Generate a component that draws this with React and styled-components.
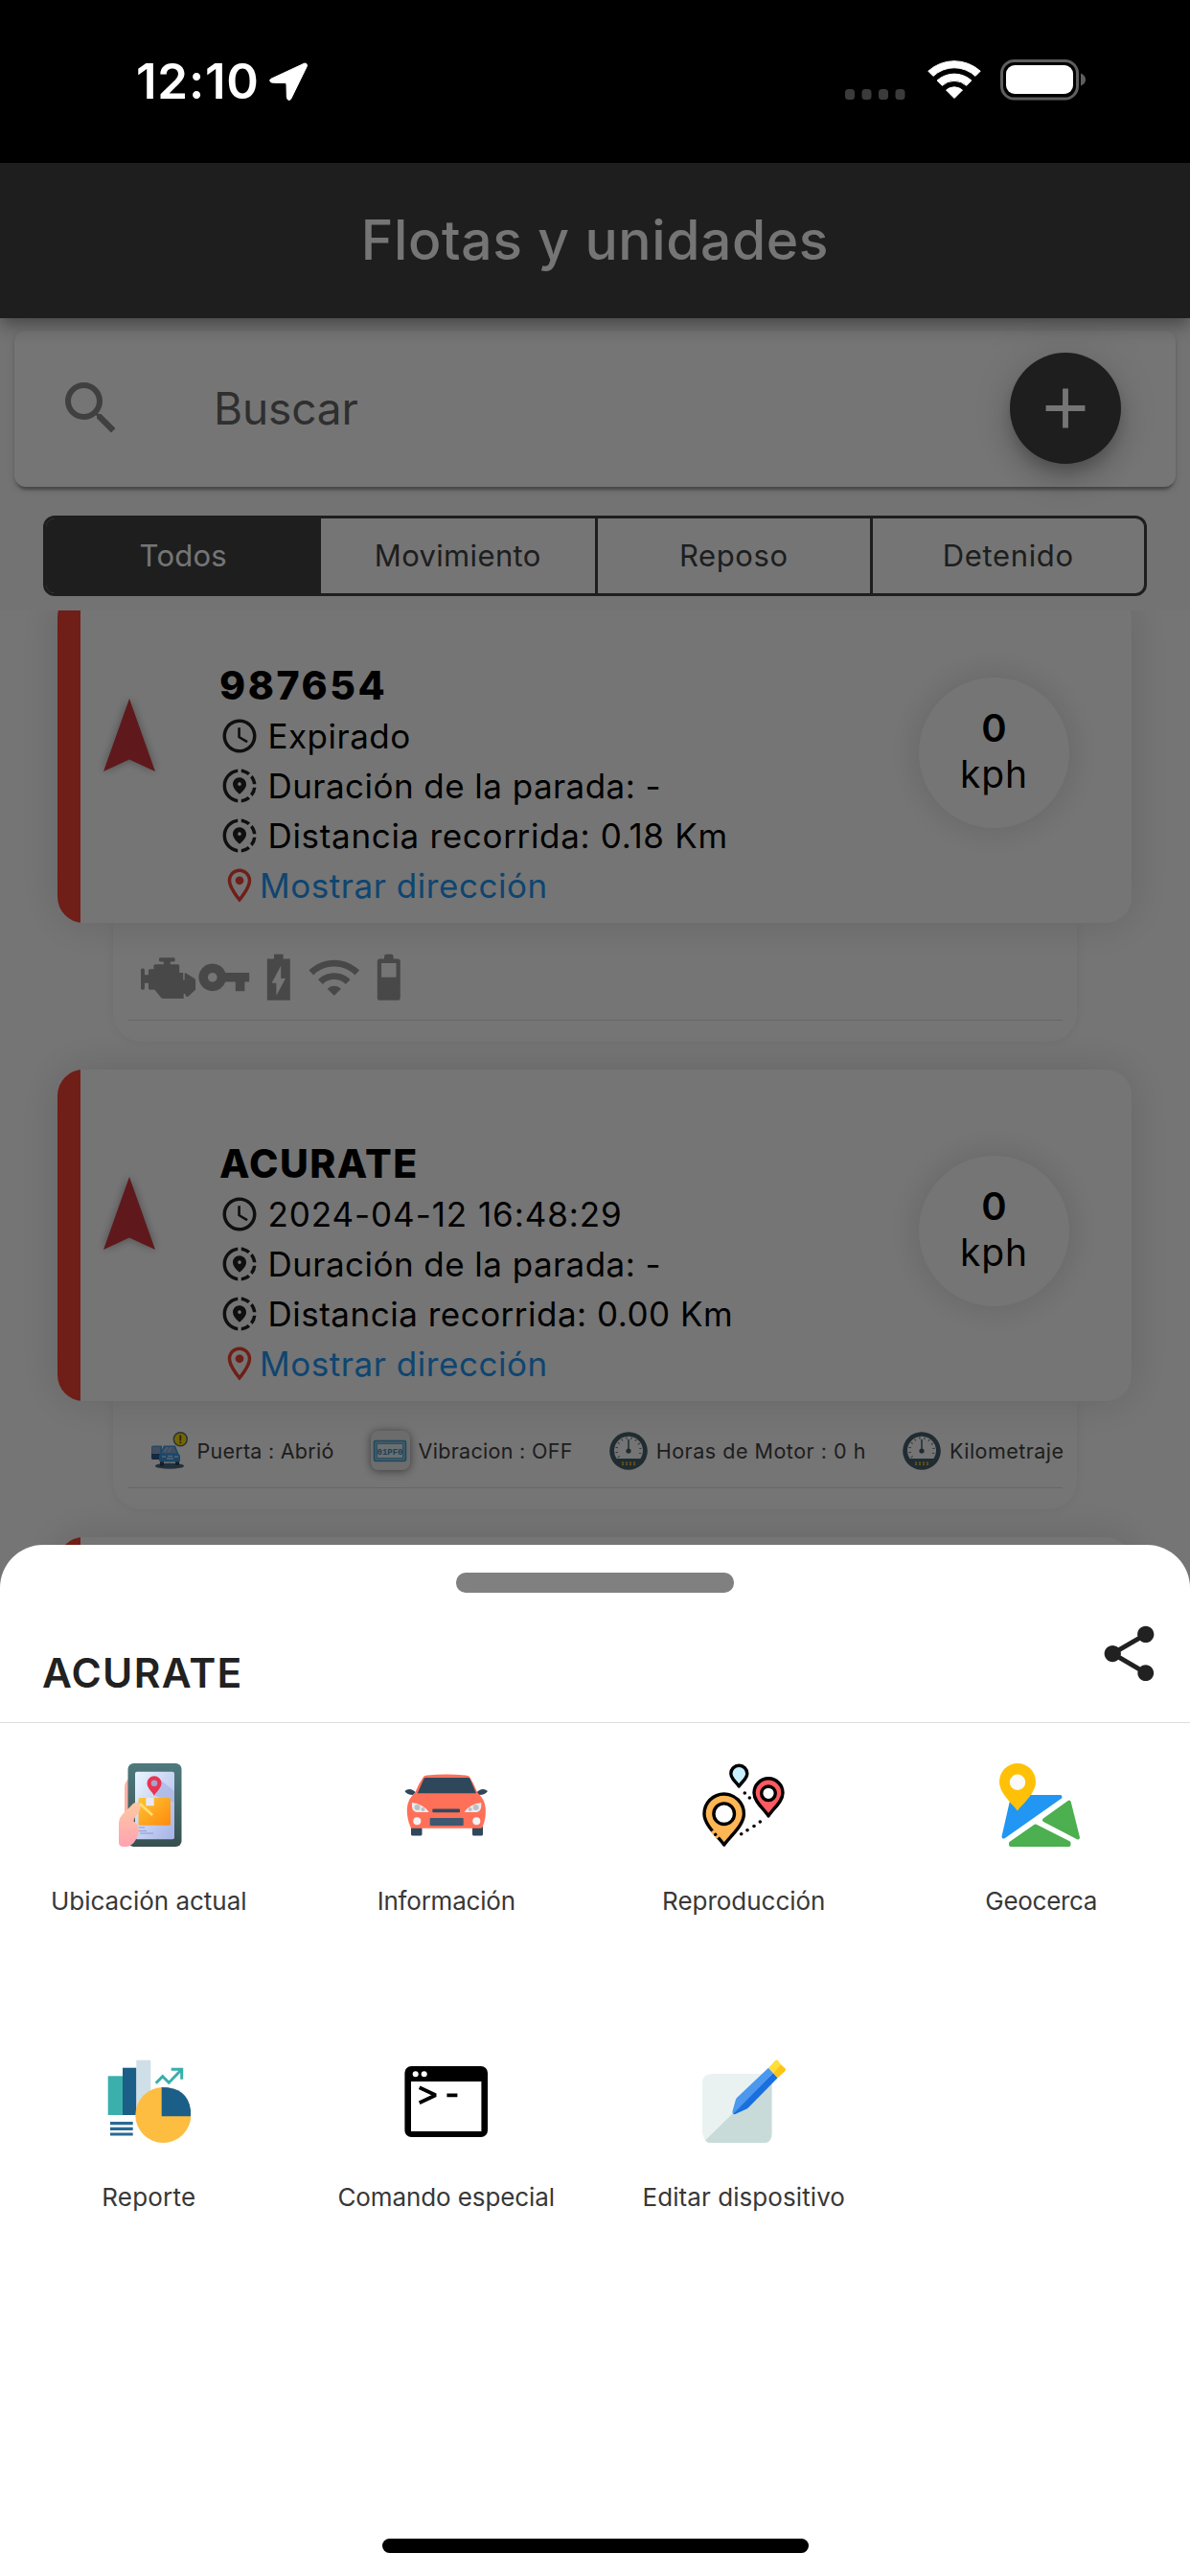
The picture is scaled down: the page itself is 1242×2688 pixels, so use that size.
import React from 'react';
import styled, { createGlobalStyle } from 'styled-components';
import {
	MdAccessTime,
	MdAdd,
	MdOutlineLocationOn,
	MdSearch,
	MdShare,
	MdShareLocation,
	MdVpnKey,
	MdWifi,
} from 'react-icons/md';

const filters = [
	{ label: 'Todos', spacing: 0.26, active: true },
	{ label: 'Movimiento', spacing: 0.35 },
	{ label: 'Reposo', spacing: 0.6, divider: true },
	{ label: 'Detenido', spacing: 0.63, divider: true },
];

const actions = [
	{ label: 'Ubicación actual', spacing: -0.02, Icon: PhoneIcon },
	{ label: 'Información', spacing: -0.21, Icon: CarIcon },
	{ label: 'Reproducción', spacing: -0.02, Icon: RouteIcon },
	{ label: 'Geocerca', spacing: -0.3, Icon: GeofenceIcon },
	{ label: 'Reporte', spacing: 0.2, Icon: ReportIcon },
	{ label: 'Comando especial', spacing: -0.1, Icon: TerminalIcon },
	{ label: 'Editar dispositivo', spacing: 0.08, Icon: EditIcon },
];

function App() {
	return (
		<Screen>
			<GlobalStyle />
			<StatusBar>
				<Clock>12:10</Clock>
				<LocationArrow />
				<StatusIcons />
			</StatusBar>
			<AppBar>
				<Title>Flotas y unidades</Title>
			</AppBar>
			<SearchCard>
				<SearchIcon />
				<Placeholder>Buscar</Placeholder>
				<AddButton>
					<MdAdd />
				</AddButton>
			</SearchCard>
			<Filters>
				{filters.map((f) => (
					<Filter key={f.label} $active={f.active} $divider={f.divider} $spacing={f.spacing}>
						{f.label}
					</Filter>
				))}
			</Filters>
			<DeviceList>
				<Device
					name="987654"
					nameSpacing={2.57}
					time="Expirado"
					timeSpacing={0.48}
					distance="0.18"
					distanceSpacing={0.68}
				>
					<StatusSensors>
						<EngineIcon />
						<MdVpnKey />
						<ChargingIcon />
						<MdWifi />
						<BatteryIcon />
					</StatusSensors>
				</Device>
				<Device
					name="ACURATE"
					nameSpacing={1.4}
					time="2024-04-12 16:48:29"
					timeSpacing={0.93}
					distance="0.00"
					distanceSpacing={0.5}
				>
					<LabelSensors>
						<Sensor $spacing={0.26}>
							<DoorIcon />
							Puerta : Abrió
						</Sensor>
						<Sensor $spacing={0.3}>
							<PlateIcon />
							Vibracion : OFF
						</Sensor>
						<Sensor $spacing={0.52}>
							<GaugeIcon />
							Horas de Motor : 0 h
						</Sensor>
						<Sensor $spacing={0.46}>
							<GaugeIcon />
							Kilometraje
						</Sensor>
					</LabelSensors>
				</Device>
				<Device name="" time="" distance="0.00" distanceSpacing={0.5} />
			</DeviceList>
			<Scrim />
			<Sheet>
				<Handle />
				<SheetHeader>
					<SheetTitle>ACURATE</SheetTitle>
					<ShareIcon />
				</SheetHeader>
				<ActionGrid>
					{actions.map(({ label, spacing, Icon }) => (
						<Action key={label}>
							<ActionIcon>
								<Icon />
							</ActionIcon>
							<ActionLabel $spacing={spacing}>{label}</ActionLabel>
						</Action>
					))}
				</ActionGrid>
				<HomeIndicator />
			</Sheet>
		</Screen>
	);
}

export default App;

function Device({ name, nameSpacing, time, timeSpacing, distance, distanceSpacing, children }) {
	return (
		<DeviceGroup>
			<DeviceCard>
				<Stripe />
				<Heading>
					<HeadingArrow />
				</Heading>
				<Info>
					<Name $spacing={nameSpacing}>{name}</Name>
					<Line $spacing={timeSpacing}>
						<MdAccessTime />
						{time}
					</Line>
					<Line $spacing={0.45}>
						<MdShareLocation />
						Duración de la parada: -
					</Line>
					<Line $spacing={distanceSpacing}>
						<MdShareLocation />
						Distancia recorrida: {distance} Km
					</Line>
					<AddressLink $spacing={0.55}>
						<MdOutlineLocationOn />
						Mostrar dirección
					</AddressLink>
				</Info>
				<Speed>
					<SpeedValue>0</SpeedValue>
					<SpeedUnit>kph</SpeedUnit>
				</Speed>
			</DeviceCard>
			{children && <SensorCard>{children}</SensorCard>}
		</DeviceGroup>
	);
}

function LocationArrow() {
	return (
		<svg width="42" height="42" viewBox="0 0 42 42" fill="#fff">
			<path
				d="M37.500 2.200 3 18.200q-2.600 1.500-.4 3.400Q3.500 22.300 5.500 22.300L17.500 22.500q1.500 0 1.500 1.500l.3 13.200q.4 3.300 2.600 3.200 1.500-.3 2.200-2L40.300 5.200q.6-3.600-2.800-3Z"
				stroke="#fff"
				strokeWidth="1"
				strokeLinejoin="round"
			/>
		</svg>
	);
}

function StatusIcons() {
	return (
		<StatusGroup>
			<svg width="67" height="44" viewBox="0 0 67 44" fill="#3b3b3b">
				<rect x="1" y="31" width="10" height="11" rx="3.500" />
				<rect x="18.500" y="31" width="10" height="11" rx="3.500" />
				<rect x="36" y="31" width="10" height="11" rx="3.500" />
				<rect x="53.500" y="31" width="10" height="11" rx="3.500" />
			</svg>
			<svg width="56" height="44" viewBox="0 0 56 44" fill="#fff" stroke="#fff" strokeLinejoin="round">
				<path d="M.8 12.200A40.500 40.500 0 0 1 55.200 12.200L50 17.400A32.300 32.300 0 0 0 6 17.400Z" />
				<path d="M10 22A27 27 0 0 1 46 22L40.600 27.300A18.500 18.500 0 0 0 15.400 27.300Z" />
				<path d="M19.500 32A13 13 0 0 1 36.500 32L28 40.500Z" />
			</svg>
			<svg width="90" height="44" viewBox="0 0 90 44">
				<rect x="1.500" y="1.500" width="79" height="39.500" rx="13" fill="none" stroke="#5e5e5e" strokeWidth="3" />
				<rect x="6" y="6" width="70" height="30" rx="9" fill="#fff" />
				<path d="M84 14.500q5 2 5 6.500t-5 6.500Z" fill="#5e5e5e" />
			</svg>
		</StatusGroup>
	);
}

function HeadingArrow() {
	return (
		<svg width="54" height="76" viewBox="0 0 54 76">
			<path d="M27 0 54 76 27 63.500 0 76Z" fill="#cf383d" />
		</svg>
	);
}

function EngineIcon() {
	return (
		<svg viewBox="0 0 58 58" fill="currentColor">
			<path d="M20.500 8h14q1.500 0 1.500 2.500t-1.500 2.500H31v3h8q1.500 0 1.500 2v8.500h4V35h1.500v-7.500q0-1.500 1.500-.5l8.500 6q1.500 1 1.500 3v11l-7.500 8q-1.500 1.500-2.500 0l-1-3h-1.500V58H24q-2 0-3-1.500L14.500 47H9.500q-1.500 0-1.500-2V39H4v6q0 2-1.500 2H1.500Q0 47 0 45V23q0-2 1.500-2h1Q4 21 4 23v6h4v-5q0-2 1.500-2h4v-4q0-2 2-2h8.500v-3h-3.500Q19 13 19 10.500T20.500 8Z" transform="translate(0 1.500) scale(1 .86)" />
		</svg>
	);
}

function ChargingIcon() {
	return (
		<svg viewBox="0 0 24 24" fill="currentColor">
			<path d="M17 4h-3V2h-4v2H7v18h10V4zm-6 16v-5.500H9L13 7v5.500h2L11 20z" />
		</svg>
	);
}

function BatteryIcon() {
	return (
		<svg viewBox="0 0 24 24" fill="currentColor">
			<path
				fillRule="evenodd"
				d="M15.800 4H14V3q0-1-1-1h-2q-1 0-1 1v1H8.200Q7 4 7 5.200v15.600Q7 22 8.200 22h7.600q1.200 0 1.200-1.200V5.200Q17 4 15.800 4ZM15.200 12H8.800V5.800h6.400Z"
			/>
		</svg>
	);
}

function DoorIcon() {
	return (
		<svg width="40" height="40" viewBox="0 0 40 40">
			<ellipse cx="20" cy="35.700" rx="15" ry="3" fill="#4a6a80" />
			<path d="M10 29h4v7h-4zM26 29h4v6h-4z" fill="#39424c" />
			<path d="M1 16q0-1.500 2-1.500h9V29H3q-2 0-2-2Z" fill="#4d9fe0" />
			<path d="M2 16h8v7H2z" fill="#93a9cf" />
			<path d="M1 23h9v6H3q-2 0-2-2Z" fill="#2b5c93" />
			<path d="M14 14.500h12l3 7.500 2 3v5q0 1.500-2 1.500H11q-2 0-2-2V25Z" fill="#3c9be0" />
			<path d="m15 16 10 0 2.500 6.500h-16Z" fill="#8ba9d8" />
			<path d="m18 16-3.500 5M22 16l-3.500 5" stroke="#c9dcf2" />
			<path d="M12 26h4M25 26h4M18 25.500h5M17 28h7" stroke="#b8e0ff" strokeWidth="1.500" />
			<circle cx="31.300" cy="7.700" r="7" fill="#ffdc0a" stroke="#5d6c70" strokeWidth="1.400" />
			<path d="M31.300 3.500v6M31.300 10.500v1.700" stroke="#4f5a3c" strokeWidth="1.800" />
		</svg>
	);
}

function PlateIcon() {
	return (
		<PlateTile>
			<svg width="36" height="24" viewBox="0 0 36 24">
				<rect x="1.500" y="1.500" width="33" height="21" rx="1.500" fill="#8fc6e0" stroke="#4c9fc9" strokeWidth="1.600" />
				<rect x="4.500" y="4.500" width="27" height="15" fill="#e6f1f6" stroke="#5badd4" strokeWidth="1" />
				<PlateText x="18" y="15.800" textAnchor="middle">
					01PF0
				</PlateText>
			</svg>
		</PlateTile>
	);
}

function GaugeIcon() {
	return (
		<svg width="40" height="40" viewBox="0 0 40 40">
			<circle cx="20" cy="20" r="19.800" fill="#47616e" />
			<path d="M7.500 28A15 15 0 1 1 32.500 28Z" fill="#fff" />
			<path d="M10 26.500A12.500 12.500 0 1 1 30 26.500" fill="none" stroke="#63757e" strokeWidth="2.500" strokeDasharray="1 4" />
			<path d="M20 8v12" stroke="#47616e" strokeWidth="1.500" />
			<circle cx="20" cy="20" r="2.600" fill="#47616e" />
			<path d="M14 31.500v4M18 31.500v4M22 31.500v4M26 31.500v4" stroke="#e8b83a" strokeWidth="2" strokeDasharray="1.500 .6" />
		</svg>
	);
}

function PhoneIcon() {
	return (
		<svg viewBox="0 0 87 87">
			<defs>
				<linearGradient id="phoneBody" x1="0" y1="0" x2="0" y2="1">
					<stop offset="0" stopColor="#4f7a7e" />
					<stop offset="1" stopColor="#374f50" />
				</linearGradient>
				<linearGradient id="phoneScreen" x1="0" y1="0" x2="1" y2="1">
					<stop offset="0" stopColor="#eaf5ff" />
					<stop offset="1" stopColor="#a6b2e6" />
				</linearGradient>
				<linearGradient id="parcel" x1="0" y1="0" x2="1" y2="1">
					<stop offset="0" stopColor="#ffc436" />
					<stop offset="1" stopColor="#ff8a0c" />
				</linearGradient>
				<linearGradient id="hand" x1="0" y1="0" x2="0" y2="1">
					<stop offset="0" stopColor="#fdc9a2" />
					<stop offset="1" stopColor="#ffa2b2" />
				</linearGradient>
			</defs>
			<path d="M24 16q-6 2-6 9v28h8Z" fill="#fbb3a6" />
			<rect x="21.500" y="0" width="56" height="87" rx="6" fill="url(#phoneBody)" />
			<rect x="29" y="8.700" width="41" height="70.500" rx="2" fill="url(#phoneScreen)" />
			<path d="m55 17 15 12v12L50 34Z" fill="#a9b3e2" opacity=".7" />
			<path d="M49 34c-1.500-4-7.500-8-7.500-13.300a7.500 7.500 0 0 1 15 0C56.500 26 50.500 30 49 34Z" fill="#e8344f" />
			<circle cx="49" cy="20.700" r="3.300" fill="#a2a5d2" />
			<rect x="32.500" y="36" width="33.500" height="28.700" rx="1.500" fill="url(#parcel)" />
			<path d="m34 42 13 12" stroke="#ffe070" strokeWidth="2.500" />
			<path d="M40.300 36h8.400v8.300h-8.400z" fill="#e6e9f6" />
			<path d="M33 67h6M33 70.500h8M34 73h14" stroke="#8c99d4" strokeWidth="1.200" />
			<path d="M12 82V63c0-9 8-13 14-20 3-3.500 9-2 8.600 3-.6 6-6.600 9-7.100 14.500 6 3 6.500 10 4 15.500-2 5-6 11-12 11-4 0-7.500 0-7.500-5Z" fill="url(#hand)" />
		</svg>
	);
}

function CarIcon() {
	return (
		<svg viewBox="0 0 87 87">
			<path d="M7 66h11.500v8q0 1.500-1.500 1.500H8.500Q7 75.500 7 74ZM71 66h11v8q0 1.500-1.500 1.500h-8q-1.500 0-1.500-1.500Z" fill="#2f475b" />
			<path d="M.4 29q4-3.500 9-.8l2.600 2-3 2.800Q3 33 .4 29ZM87 29q-4-3.500-9-.8l-2.600 2 3 2.800Q84.300 33 87 29Z" fill="#2f475b" />
			<path d="M20 14q1-1.500 3.500-1.600 20.200-1.600 40.500 0 3 .1 4 1.600 5 8 8.500 17 7.500 6 8.300 16 .7 11-3.300 19.500-.3 1.300-2 1.300H8.500q-1.700 0-2-1.300-4-8.500-3.700-19.500.7-10 8.200-16Q15 21 20 14Z" fill="#ff7058" />
			<path d="M22.500 15h44q1.500 0 2 1l6.500 15.200H13.700L20.400 16q.6-1 2.100-1Z" fill="#2f475b" />
			<path d="M8 41q11 1 17.500 9.500L25 51H12.500Q7 50 8 41ZM80.200 41q-11 1-17.500 9.500l.5.500h12.500Q81.200 50 80.200 41Z" fill="#e9ebee" />
			<g fill="#bdbfc3">
				<circle cx="13.500" cy="46" r="3" />
				<circle cx="19.500" cy="48" r="2" />
				<circle cx="74.700" cy="46" r="3" />
				<circle cx="68.700" cy="48" r="2" />
			</g>
			<rect x="29.300" y="47.500" width="28.700" height="3.800" rx="1" fill="#324a5e" />
			<rect x="26.700" y="57" width="35" height="8" rx="1" fill="#3f5870" />
			<circle cx="13.300" cy="60.300" r="4" fill="#f1f2f4" />
			<circle cx="75.300" cy="60.300" r="4" fill="#f1f2f4" />
		</svg>
	);
}

function RouteIcon() {
	return (
		<svg viewBox="0 0 87 87" stroke="#000" strokeWidth="3.400" strokeLinejoin="round">
			<path d="M38.300 24C35.500 19.500 29.800 16 29.800 10.700a8.500 8.500 0 0 1 17 0C46.800 16 41 19.500 38.300 24Z" fill="#c9f1ff" />
			<path d="M69 55C65 48 54 40.500 54 30.800a15 15 0 0 1 30 0C84 40.500 73 48 69 55Z" fill="#ff5a60" />
			<circle cx="69" cy="31.300" r="7.300" fill="#fff" />
			<path d="M22.700 85C17.500 77 2 65 2 52.700a20.700 20.700 0 0 1 41.400 0C43.400 65 28 77 22.700 85Z" fill="#ffb655" />
			<circle cx="22.700" cy="52.700" r="10.800" fill="#fff" />
			<path d="m10.500 70.500 6 7" stroke="#ffb655" strokeWidth="4.200" />
			<g stroke="none">
				<circle cx="13.700" cy="74.300" r="1.700" />
				<circle cx="44.300" cy="31" r="1.800" />
				<circle cx="49.300" cy="36" r="1.800" />
				<circle cx="40.700" cy="73.700" r="1.800" />
				<circle cx="47" cy="69.700" r="1.800" />
				<circle cx="54" cy="65.500" r="1.800" />
				<circle cx="60.300" cy="61" r="1.800" />
			</g>
		</svg>
	);
}

function GeofenceIcon() {
	return (
		<svg viewBox="0 0 87 87">
			<g strokeWidth="4" strokeLinejoin="round">
				<path d="M14 35h49.500L4.500 76.500Z" fill="#2196f3" stroke="#2196f3" />
				<path d="m47 59.200 25.800-18.500L82 77.500Z" fill="#4caf50" stroke="#4caf50" />
				<path d="M37.800 65.500 72.500 83v2h-60.500v-1.500Z" fill="#4caf50" stroke="#4caf50" />
			</g>
			<path
				fillRule="evenodd"
				d="M19 49.700C15.500 44 0 32 0 19a19 19 0 0 1 38 0C38 32 22.500 44 19 49.700Z"
				fill="#ffc107"
			/>
			<circle cx="19" cy="19.700" r="8.200" fill="#fafafa" />
		</svg>
	);
}

function ReportIcon() {
	return (
		<svg viewBox="0 0 87 87">
			<rect x=".7" y="17.300" width="15.500" height="40.700" fill="#3aafab" />
			<rect x="16" y="8.700" width="14.500" height="49.300" fill="#1b5e87" />
			<rect x="30.300" y=".7" width="15" height="50" fill="#cfdfe8" />
			<circle cx="58.300" cy="58" r="29" fill="#fdbd40" />
			<path d="M56.700 59.300V29q31 0 30.600 30.300Z" fill="#1b5e87" />
			<path d="M3 66.700h23.700M3 72.300h23.700M3 78h23.700" stroke="#2a6a93" strokeWidth="3.200" />
			<path d="m50.700 24.700 7-7 6.600 6.500L77 11M66.700 10.200h11v10.500" fill="none" stroke="#3aafab" strokeWidth="3" />
		</svg>
	);
}

function TerminalIcon() {
	return (
		<svg viewBox="0 0 87 87">
			<rect x=".4" y="7" width="86.600" height="74" rx="7" />
			<path d="M7 23h73.400v52H7z" fill="#fff" />
			<circle cx="11.700" cy="15.300" r="3" fill="#fff" />
			<circle cx="20.700" cy="15.300" r="3" fill="#fff" />
			<path d="m15.700 29.300 17 8-17 8M44.400 37.300h11" fill="none" stroke="#000" strokeWidth="3.800" strokeLinejoin="bevel" />
		</svg>
	);
}

function EditIcon() {
	return (
		<svg viewBox="0 0 87 87">
			<path d="M10 15h52.500q10 0 10 10v52.500q0 10-10 10H10q-4 0-7-3l-3-7V25Q0 15 10 15Z" fill="#eaf2f1" />
			<path d="M72.500 16v61.500q0 10-10 10H10q-4 0-7-3Z" fill="#c8dbd9" />
			<path d="M69 8.700 36.500 39.500q-1.300 1.200-1.800 3L31.500 54q-.3 2 .9 3L74 14Z" fill="#4c98ee" />
			<path d="m78.600 19.300-30.500 31q-1 1.200-2.700 1.800L34.500 57q-1.500.5-2.300-.300L74 14Z" fill="#1a6fe0" />
			<path d="m69 8.700 7-7.500q1.500-1.500 3 0l3.200 4.200L74 14Z" fill="#ffdd3b" />
			<path d="m74 14 8-8.800 4.300 4q1.500 1.500 0 3l-7.700 7.100Z" fill="#fcc417" />
		</svg>
	);
}

const GlobalStyle = createGlobalStyle`
	* {
		box-sizing: border-box;
	}
	body {
		margin: 0;
		background: #fff;
		font-family: Inter, Roboto, sans-serif;
	}
	svg {
		display: block;
		flex-shrink: 0;
	}
`;

const Screen = styled.div`
	position: relative;
	display: flex;
	flex-direction: column;
	width: 1242px;
	height: 2688px;
	overflow: hidden;
	background: #fafafa;
`;

const StatusBar = styled.div`
	display: flex;
	align-items: center;
	flex-shrink: 0;
	height: 170px;
	padding: 0 108px 0 142px;
	background: #000;
	color: #fff;
`;

const Clock = styled.div`
	width: 138px;
	font-size: 51px;
	font-weight: 600;
	line-height: 60px;
	letter-spacing: 0.78px;
	white-space: nowrap;
	padding-bottom: 1px;
`;

const StatusGroup = styled.div`
	display: flex;
	gap: 20px;
	margin-left: auto;
	padding-bottom: 2px;
`;

const AppBar = styled.div`
	z-index: 1;
	display: flex;
	align-items: center;
	justify-content: center;
	flex-shrink: 0;
	height: 161.5px;
	background: #424242;
	box-shadow: 0 6px 12px -3px rgba(0, 0, 0, 0.2), 0 12px 15px rgba(0, 0, 0, 0.14),
		0 3px 30px rgba(0, 0, 0, 0.12);
`;

const Title = styled.div`
	color: #fff;
	font-size: 57px;
	font-weight: 500;
	letter-spacing: 0.59px;
`;

const SearchCard = styled.div`
	display: flex;
	align-items: center;
	flex-shrink: 0;
	height: 162.5px;
	margin: 13.5px 15px 0;
	padding: 0 57px 0 44px;
	border-radius: 12px;
	background: #fff;
	box-shadow: 0 6px 3px -3px rgba(0, 0, 0, 0.2), 0 3px 3px rgba(0, 0, 0, 0.14),
		0 3px 9px rgba(0, 0, 0, 0.12);
`;

const SearchIcon = styled(MdSearch)`
	width: 72px;
	height: 72px;
	color: #8c8c8c;
`;

const Placeholder = styled.div`
	flex: 1;
	margin-left: 92px;
	color: #666;
	font-size: 46px;
	letter-spacing: -0.15px;
`;

const AddButton = styled.div`
	display: flex;
	align-items: center;
	justify-content: center;
	width: 116px;
	height: 116px;
	border-radius: 50%;
	background: #424242;
	color: #fff;
	font-size: 70px;
	box-shadow: 0 9px 15px -3px rgba(0, 0, 0, 0.2), 0 18px 30px rgba(0, 0, 0, 0.14),
		0 3px 54px rgba(0, 0, 0, 0.12);
`;

const Filters = styled.div`
	display: grid;
	grid-template-columns: repeat(4, 1fr);
	flex-shrink: 0;
	height: 84px;
	margin: 30px 45px 0;
	border: 3px solid #424242;
	border-radius: 12px;
	overflow: hidden;
	background: #fff;
`;

const Filter = styled.div`
	display: flex;
	align-items: center;
	justify-content: center;
	border-left: ${(props) => (props.$divider ? '3px solid #424242' : 'none')};
	background: ${(props) => (props.$active ? '#424242' : 'transparent')};
	color: ${(props) => (props.$active ? '#fff' : '#424242')};
	font-size: 31px;
	letter-spacing: ${(props) => props.$spacing}px;
`;

const DeviceList = styled.div`
	flex: 1;
	min-height: 0;
	margin-top: 15px;
	overflow: hidden;
	background: #fff;
`;

const DeviceGroup = styled.div`
	margin-bottom: 29px;

	&:first-child {
		margin-top: -20px;
	}
`;

const DeviceCard = styled.div`
	position: relative;
	display: flex;
	height: 346px;
	margin: 0 61px 0 60px;
	border-radius: 27px;
	overflow: hidden;
	background: #fff;
	box-shadow: 0 0 45px rgba(0, 0, 0, 0.14);
`;

const Stripe = styled.div`
	width: 24px;
	background: #f44336;
`;

const Heading = styled.div`
	width: 101px;
	padding: 112px 0 0 24px;

	svg {
		filter: drop-shadow(0 0 5px rgba(0, 0, 0, 0.35));
	}
`;

const Info = styled.div`
	flex: 1;
	padding: 71px 0 0 44px;
	color: #000;
	white-space: nowrap;
`;

const Name = styled.div`
	height: 54px;
	font-size: 41px;
	font-weight: 800;
	line-height: 55px;
	letter-spacing: ${(props) => props.$spacing}px;
`;

const Line = styled.div`
	display: flex;
	align-items: center;
	gap: 8.5px;
	height: 52px;
	font-size: 35px;
	letter-spacing: ${(props) => props.$spacing}px;

	svg {
		width: 42px;
		height: 42px;
		color: #212121;
	}
`;

const AddressLink = styled(Line)`
	gap: 0;
	color: #2196f3;

	svg {
		color: #f44336;
	}
`;

const Speed = styled.div`
	width: 157px;
	height: 157px;
	margin: 90px 65px 0 0;
	padding-top: 29px;
	border-radius: 50%;
	background: #fff;
	box-shadow: 0 0 36px rgba(0, 0, 0, 0.15);
	color: #000;
	text-align: center;
	line-height: 48px;
`;

const SpeedValue = styled.div`
	font-size: 40px;
	font-weight: 600;
`;

const SpeedUnit = styled.div`
	font-size: 39px;
	letter-spacing: 0.86px;
`;

const SensorCard = styled.div`
	margin: 0 118px;
	padding: 14px 15px 22px;
	border-radius: 0 0 30px 30px;
	box-shadow: 0 0 12px rgba(0, 0, 0, 0.07);
`;

const StatusSensors = styled.div`
	display: flex;
	align-items: center;
	height: 88px;
	padding-left: 14px;
	border-bottom: 1px solid #e0e0e0;
	color: #9e9e9e;

	svg {
		width: 57.6px;
		height: 57.6px;
	}
`;

const LabelSensors = styled.div`
	display: flex;
	align-items: center;
	gap: 38px;
	height: 77px;
	padding-left: 23.5px;
	border-bottom: 1px solid #e0e0e0;
`;

const Sensor = styled.div`
	display: flex;
	align-items: center;
	gap: 9px;
	color: #424242;
	font-size: 21.5px;
	letter-spacing: ${(props) => props.$spacing}px;
	white-space: nowrap;
`;

const PlateTile = styled.div`
	display: flex;
	align-items: center;
	justify-content: center;
	width: 41px;
	height: 41px;
	border-radius: 8px;
	background: #ededed;
	box-shadow: 0 1px 10px rgba(0, 0, 0, 0.5);
`;

const PlateText = styled.text`
	fill: #3f8db8;
	font: bold 9px 'Liberation Mono', monospace;
	letter-spacing: 0;
`;

const Scrim = styled.div`
	position: absolute;
	z-index: 2;
	inset: 170px 0 0;
	background: rgba(0, 0, 0, 0.54);
`;

const Sheet = styled.div`
	position: absolute;
	z-index: 3;
	inset: 1612px 0 0;
	display: flex;
	flex-direction: column;
	align-items: center;
	padding: 29px 0 24px;
	border-radius: 45px 45px 0 0;
	background: #fff;
`;

const Handle = styled.div`
	width: 290px;
	height: 21px;
	border-radius: 10px;
	background: #808080;
`;

const SheetHeader = styled.div`
	display: flex;
	justify-content: space-between;
	align-self: stretch;
	height: 136px;
	padding: 29px 29px 0 44px;
	border-bottom: 1px solid #dedede;
`;

const SheetTitle = styled.div`
	margin-top: 28.5px;
	color: #212121;
	font-size: 42.5px;
	font-weight: 600;
	line-height: 52px;
	letter-spacing: 1.28px;
`;

const ShareIcon = styled(MdShare)`
	width: 69px;
	height: 69px;
	color: #212121;
`;

const ActionGrid = styled.div`
	display: grid;
	grid-template-columns: repeat(4, 1fr);
	grid-auto-rows: 309px;
	align-self: stretch;
	padding-top: 42px;
`;

const Action = styled.div`
	display: flex;
	flex-direction: column;
	align-items: center;
`;

const ActionIcon = styled.div`
	width: 87px;
	height: 87px;
`;

const ActionLabel = styled.div`
	margin-top: 41px;
	color: #383838;
	font-size: 26px;
	line-height: 32px;
	letter-spacing: ${(props) => props.$spacing}px;
`;

const HomeIndicator = styled.div`
	width: 445px;
	height: 15px;
	margin-top: auto;
	border-radius: 8px;
	background: #000;
`;
